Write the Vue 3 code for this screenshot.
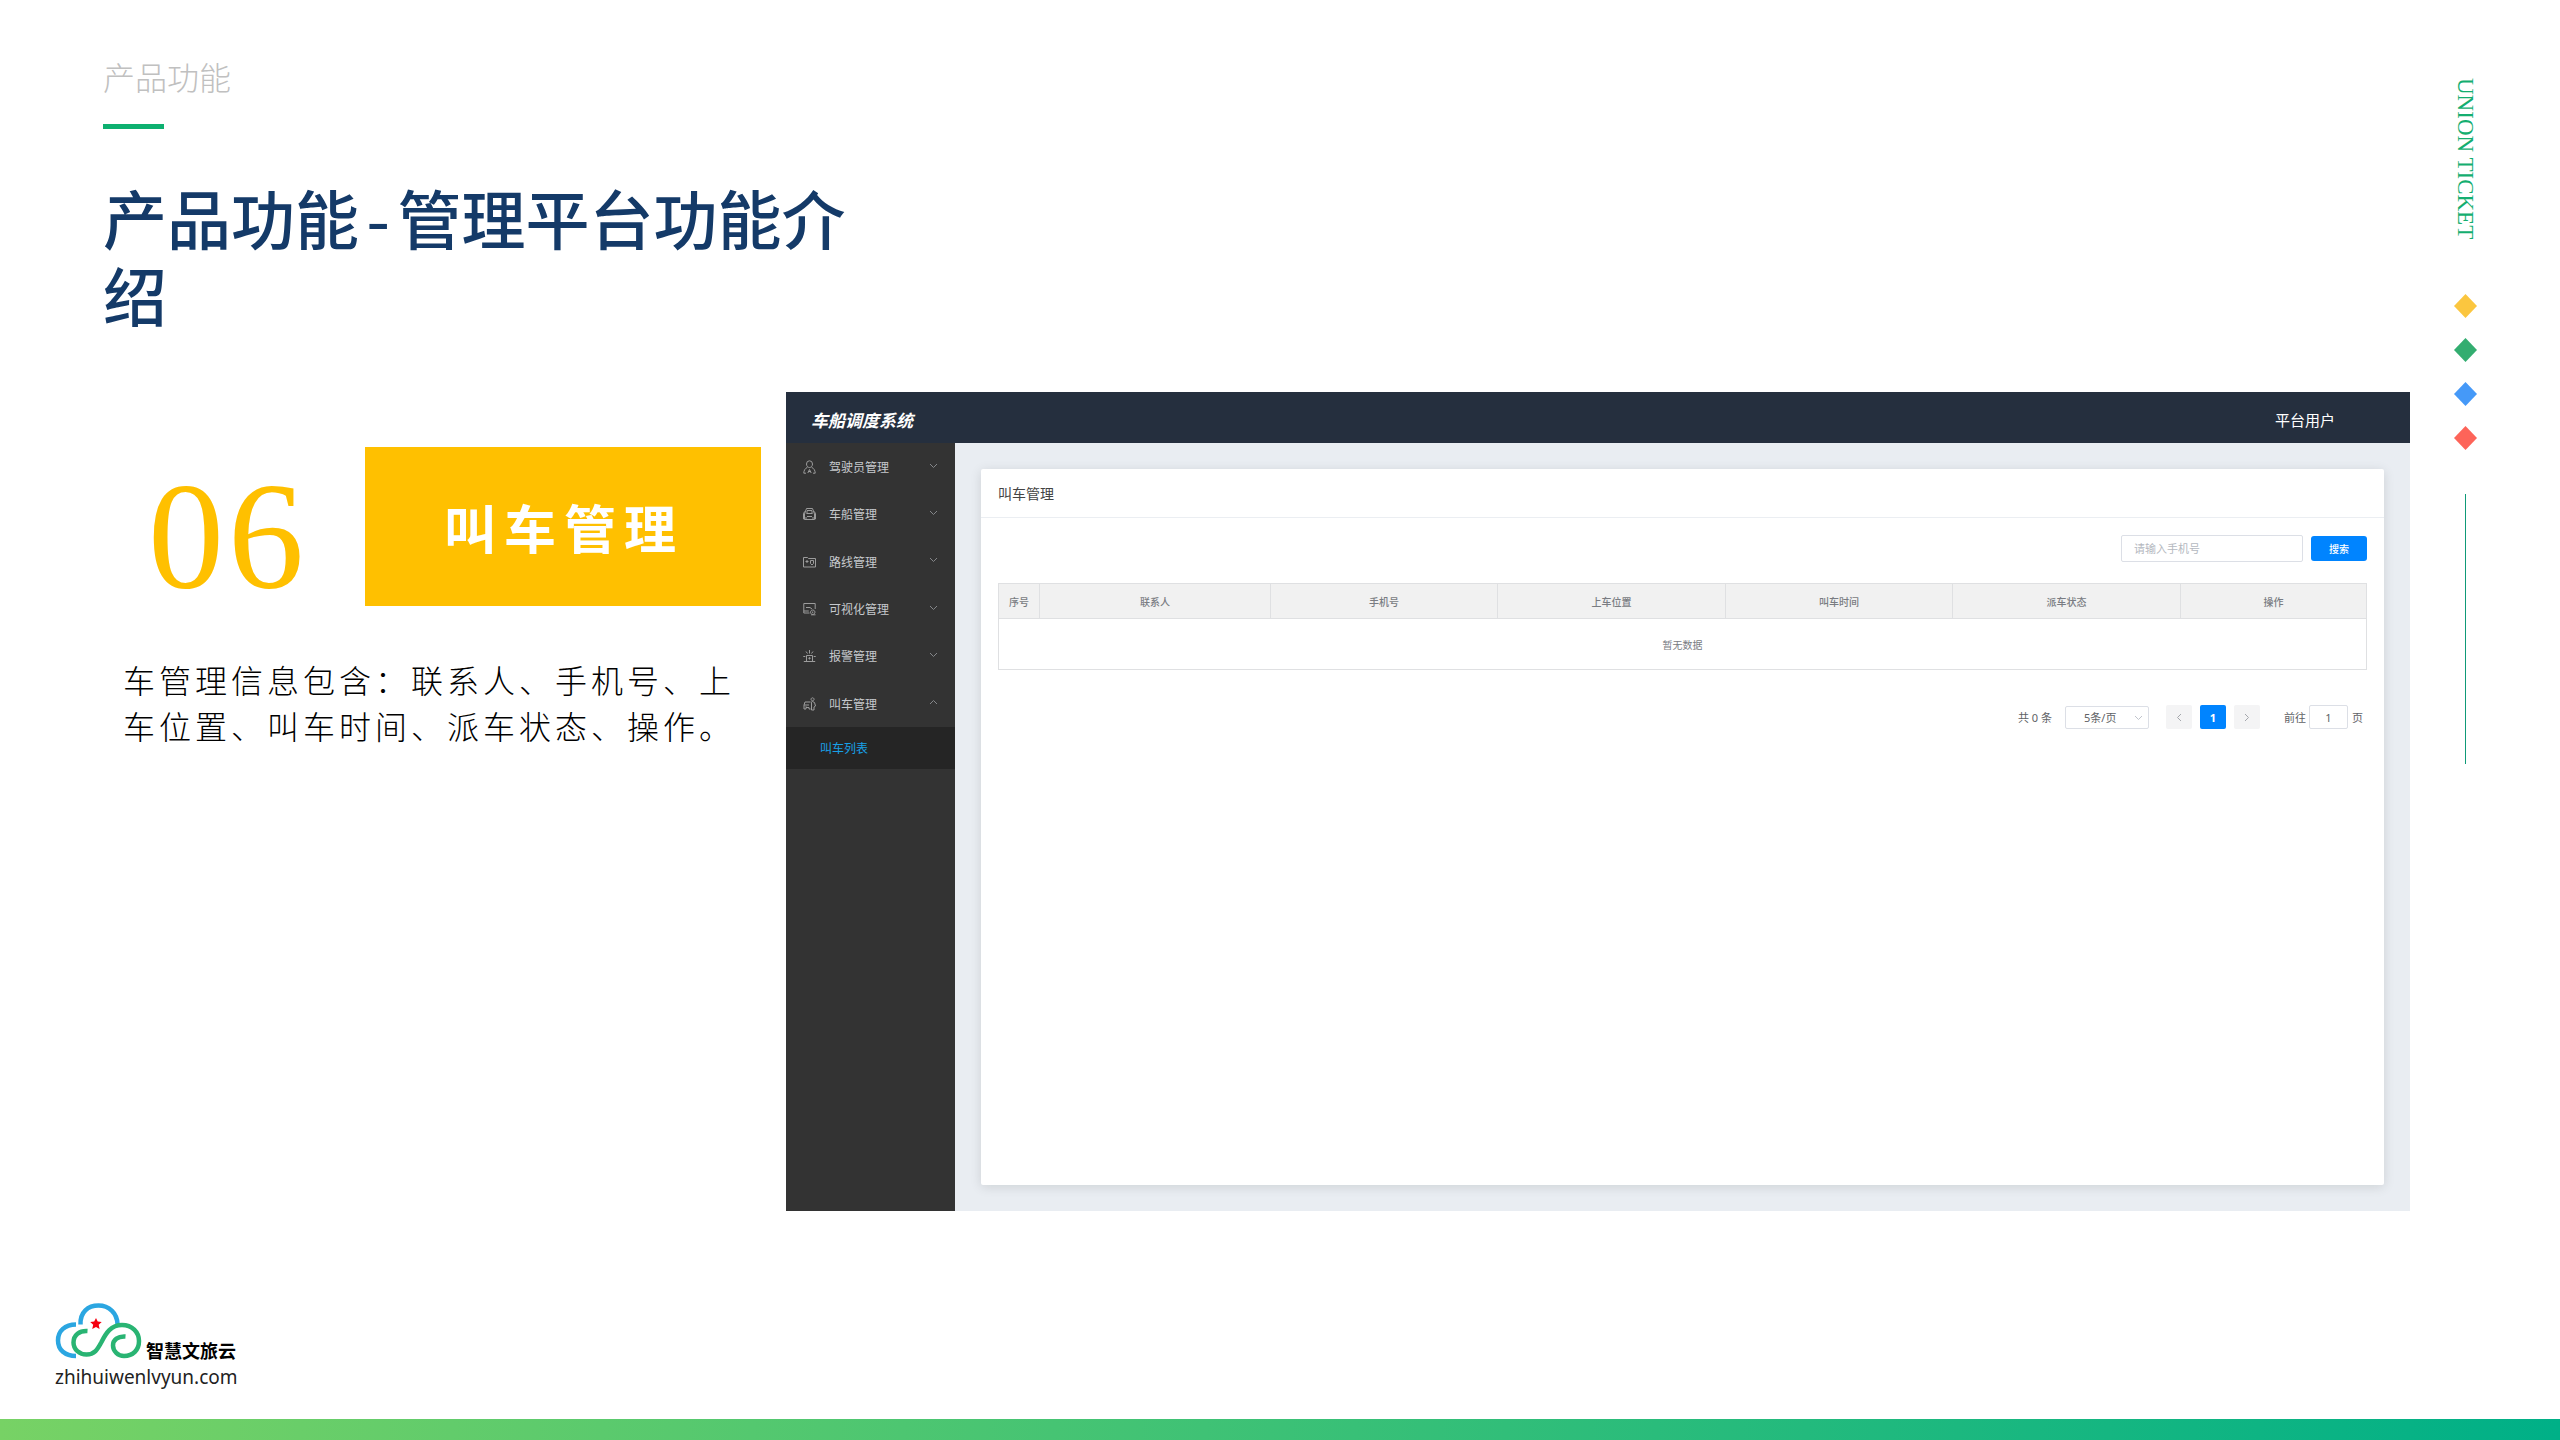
<script setup>
const menu = [
  { label: '驾驶员管理', icon: 'driver' },
  { label: '车船管理', icon: 'vehicle' },
  { label: '路线管理', icon: 'route' },
  { label: '可视化管理', icon: 'visual' },
  { label: '报警管理', icon: 'alarm' },
  { label: '叫车管理', icon: 'call', open: true },
]
const columns = [
  { label: '序号', width: 41 },
  { label: '联系人', width: 231 },
  { label: '手机号', width: 227 },
  { label: '上车位置', width: 228 },
  { label: '叫车时间', width: 227 },
  { label: '派车状态', width: 228 },
  { label: '操作', width: 186 },
]
const total = columns.reduce((sum, c) => sum + c.width, 0)
const diamonds = ['#fbc63f', '#33ad70', '#4599f8', '#fd6459']
const icons = {
  driver: 'M6.500 .8a3 3.300 0 0 1 3 3.200c0 2-1.300 3.500-3 3.500S3.500 6 3.500 4a3 3.300 0 0 1 3-3.200zM4.500 7.200C2 8.500 .8 10.500 .8 13.200H3M8.500 7.200c2.500 1.300 3.700 3.300 3.700 6H10M6.500 9.500L4.800 13M6.500 9.500L8.200 13M5.200 11.500h2.600',
  vehicle: 'M3.500 1.500h6L11.500 7v5.500h-10V7zM4 3.500h5M3.500 6.500h6M4 6.500V4M9 6.500V4M4 9.500h5M1.500 4.500L.5 7v5h1M11.500 4.500l1 2.500v5h-1M3 12.500V10M10 12.500V10',
  route: 'M.5 2.500h4l1 1h7v8.500H.5zM4 5v3M2.500 6.500h3M7.500 5.500h3v3l-1.500 1.500-1.500-1.500z',
  visual: 'M6.500 11H.8V1.500h11.400V7M.8 9h5M3 5.500h4l2 1.500M9.700 8a2.200 2.200 0 1 0 .1 0zM8 12.800h4.500M9.700 9.500v1.500',
  alarm: 'M3.500 12V6.500h6V12M.8 12.500h11.400M6.500 1v3.500M3 2.500l1.500 2M10 2.500l-1.500 2M.3 7.500h2M10.700 7.500h2M6.500 8.200v2.300M5.300 9.300h2.400',
  call: 'M7.500 5H2L1 8v4h2v-1.500h3V12h1.500M1 8h5M2.500 9.800h1M9.500 .8a1.500 1.500 0 1 0 .1 0zM8 5.500l1.500-1 2 1L12.500 9l-1.500 1v3H8.500V5.500',
}
</script>

<template>
  <div class="slide">
    <main class="stage">
      <header class="heading">
        <p class="eyebrow">产品功能</p>
        <span class="rule"></span>
        <h1>产品功能-管理平台功能介绍</h1>
      </header>

      <div class="body">
        <section class="intro">
          <div class="intro-top">
            <span class="number">06</span>
            <h2>叫车管理</h2>
          </div>
          <p class="desc">车管理信息包含：联系人、手机号、上车位置、叫车时间、派车状态、操作。</p>
        </section>

        <section class="app">
          <header class="app-bar">
            <strong>车船调度系统</strong>
            <span>平台用户</span>
          </header>
          <div class="app-main">
            <nav class="side">
              <ul>
                <li v-for="m in menu" :key="m.icon">
                  <svg class="icon" viewBox="0 0 13 14"><path :d="icons[m.icon]" /></svg>
                  <span>{{ m.label }}</span>
                  <svg class="chev" viewBox="0 0 9 6"><path :d="m.open ? 'M1 5l3.500-3.500L8 5' : 'M1 1l3.500 3.500L8 1'" /></svg>
                </li>
              </ul>
              <a class="sub" href="#">叫车列表</a>
            </nav>
            <div class="content">
              <div class="panel">
                <h3>叫车管理</h3>
                <div class="panel-body">
                  <form class="search" @submit.prevent>
                    <input type="text" placeholder="请输入手机号" aria-label="手机号" />
                    <button type="submit">搜索</button>
                  </form>
                  <table>
                    <colgroup>
                      <col v-for="c in columns" :key="c.label" :style="{ width: (c.width / total) * 100 + '%' }" />
                    </colgroup>
                    <thead>
                      <tr><th v-for="c in columns" :key="c.label">{{ c.label }}</th></tr>
                    </thead>
                    <tbody>
                      <tr><td :colspan="columns.length">暂无数据</td></tr>
                    </tbody>
                  </table>
                  <div class="pager">
                    <span class="count">共 0 条</span>
                    <div class="size">
                      <select aria-label="每页条数"><option>5条/页</option></select>
                      <svg class="chev" viewBox="0 0 9 6"><path d="M1 1l3.500 3.500L8 1" /></svg>
                    </div>
                    <div class="pages">
                      <button type="button" aria-label="上一页"><svg viewBox="0 0 6 9"><path d="M5 1L1.500 4.500 5 8" /></svg></button>
                      <button type="button" class="on">1</button>
                      <button type="button" aria-label="下一页"><svg viewBox="0 0 6 9"><path d="M1 1l3.500 3.500L1 8" /></svg></button>
                    </div>
                    <label class="jump">前往<input type="text" value="1" />页</label>
                  </div>
                </div>
              </div>
            </div>
          </div>
        </section>
      </div>
    </main>

    <aside class="rail">
      <span class="rail-text">UNION TICKET</span>
      <div class="diamonds">
        <svg v-for="d in diamonds" :key="d" viewBox="0 0 23 24"><path d="M11.500 0L23 12 11.500 24 0 12z" :fill="d" /></svg>
      </div>
      <span class="rail-line"></span>
    </aside>

    <footer class="foot">
      <div class="brand">
        <svg viewBox="0 0 87 56">
          <g fill="none" stroke-width="4.500">
            <path stroke="#2ba6e1" d="M25.500 21.500C25 9 33 2.500 43.500 2.500S62 10 62.500 21" />
            <path stroke="#2ba6e1" d="M21 21.500C10 21.500 3 28 3 37.500S10 53 21 53" />
            <path stroke="#29b473" d="M32.500 28c-8-.5-14 4-14 11.500 0 7 6 12 13 12 8 0 11-5 15-12.500C51 30 56 22 67 22c10 0 17 7 17 16s-6 15-15 15c-6 0-11-5-11-10.500C58 36.500 63 33 70.500 33.500" />
          </g>
          <path fill="#f5000f" d="M41 15l1.700 3.600 4 .4-3 2.800.9 4.200-3.600-2.100-3.800 2.100 1-4.200-3-2.800 4-.4z" />
        </svg>
        <b>智慧文旅云</b>
      </div>
      <p class="site">zhihuiwenlvyun.com</p>
      <div class="stripe"></div>
    </footer>
  </div>
</template>

<style>
body { margin: 0; background: #fff; }
</style>

<style scoped>
.slide {
  min-height: 100vh;
  box-sizing: border-box;
  display: grid;
  grid-template-columns: 1fr 150px;
  grid-template-rows: auto 1fr;
  font-family: "Liberation Serif", "Noto Sans CJK SC", sans-serif;
  color: #000;
}
h1, h2, h3, p, ul { margin: 0; padding: 0; font-weight: 400; }
.stage { padding-top: 54px; }
.heading { padding-left: 103px; }
.eyebrow { font-size: 32px; line-height: 44px; color: #c0c0c0; font-weight: 300; font-family: "Noto Sans CJK SC", sans-serif; }
.rule { display: block; width: 61px; height: 5px; margin-top: 26px; background: #0db070; }
h1 { max-width: 760px; margin-top: 60px; font-family: "Liberation Mono", "Noto Sans CJK SC", monospace; font-size: 64px; line-height: 77px; font-weight: 500; color: #143a68; }

.body { display: flex; margin-top: 49px; }
.intro { flex: none; width: 761px; margin-right: 25px; padding-top: 55px; }
.intro-top { display: flex; align-items: center; justify-content: space-between; height: 159px; }
.number { margin-left: 148px; padding-top: 20px; font-size: 152px; line-height: 160px; letter-spacing: 4px; color: #ffc000; }
h2 { box-sizing: border-box; width: 396px; height: 159px; padding-top: 5px; padding-left: 2px; text-align: center; font-size: 52px; line-height: 159px; letter-spacing: 8px; font-weight: 700; color: #fff; background: #ffc000; }
.desc { margin: 50px 0 0 123px; font-family: "Noto Sans CJK SC", sans-serif; font-size: 32px; font-weight: 300; line-height: 46px; letter-spacing: 4px; width: 620px; }

.app { flex: 1; display: flex; flex-direction: column; min-height: 819px; font-family: "Noto Sans", "Noto Sans CJK SC", sans-serif; }
.app-bar { display: flex; justify-content: space-between; align-items: center; height: 51px; padding: 4px 75px 0 25px; box-sizing: border-box; background: #252f3e; color: #fff; font-size: 15px; }
.app-bar strong { font-size: 17px; font-style: italic; font-weight: 700; }
.app-main { flex: 1; display: flex; }
.side { width: 169px; background: #333; font-size: 12px; color: #c6c9cd; }
.side ul { display: flex; flex-direction: column; min-height: 284px; list-style: none; }
.side li { flex: 1; display: flex; align-items: center; padding: 1px 17px 0; }
.icon { width: 13px; height: 14px; margin-right: 13px; fill: none; stroke: #9c9c9c; stroke-width: 1; }
.chev { width: 9px; height: 6px; margin-left: auto; fill: none; stroke: #85878a; stroke-width: 1; }
.side li .chev { margin-top: -3px; }
.sub { display: block; padding: 1px 0 0 34px; line-height: 41px; background: #252525; color: #18a0e8; text-decoration: none; }
.content { flex: 1; display: flex; padding: 26px; background: #e9edf2; }
.panel { flex: 1; background: #fff; border-radius: 2px; box-shadow: 0 2px 12px rgba(0, 20, 20, .12); }
h3 { padding: 2px 0 0 17px; border-bottom: 1px solid #ebeef2; font-size: 14px; line-height: 46px; color: #444; }
.panel-body { padding: 17px 17px 0 17px; }
.search { display: flex; justify-content: flex-end; align-items: center; gap: 8px; }
input, select, button { box-sizing: border-box; margin: 0; font-family: inherit; border-radius: 2px; }
input, select { border: 1px solid #dcdfe6; background: #fff; color: #606266; }
.search input { width: 182px; height: 27px; padding: 0 12px; font-size: 11px; }
.search input::placeholder { color: #b4b8c0; }
.search button { width: 56px; height: 25px; padding: 0; border: 0; border-radius: 3px; background: #0084ff; color: #fff; font-size: 10px; font-weight: 500; }
table { width: 100%; margin-top: 21px; table-layout: fixed; border-collapse: collapse; font-size: 10px; color: #797c82; }
th, td { padding: 0; border: 1px solid #dfe0e2; text-align: center; font-weight: 500; }
th { height: 34px; background: #f1f1f1; }
td { height: 50px; font-weight: 400; }
.pager { display: flex; justify-content: flex-end; align-items: center; margin-top: 35px; padding-right: 4px; font-size: 11px; color: #606266; }
.size { position: relative; width: 84px; height: 23px; margin: 0 17px 0 13px; }
.size select { appearance: none; width: 100%; height: 100%; padding: 0 18px; font-size: 11px; }
.size .chev { position: absolute; right: 6px; top: 9px; stroke: #c0c4cc; }
.pages { display: flex; gap: 8px; }
.pages button { width: 26px; height: 24px; padding: 0; border: 0; background: #f4f4f5; font-size: 11px; display: grid; place-items: center; }
.pages button svg { width: 6px; height: 9px; fill: none; stroke: #a4a7ac; }
.pages .on { background: #0084ff; color: #fff; font-weight: 700; }
.jump { display: flex; align-items: center; margin-left: 24px; }
.jump input { width: 39px; height: 24px; margin: 0 4px 0 3px; padding: 0; text-align: center; font-size: 11px; }

.rail { display: flex; flex-direction: column; align-items: center; padding: 78px 39px 0 0; }
.rail-text { writing-mode: vertical-rl; font-size: 23px; line-height: 27px; height: 162px; white-space: nowrap; color: #14ae70; }
.diamonds { display: flex; flex-direction: column; gap: 20px; margin-top: 54px; }
.diamonds svg { width: 23px; height: 24px; }
.rail-line { width: 1px; height: 270px; margin-top: 44px; background: #0f9a78; }

.foot { grid-column: 1 / -1; display: flex; flex-direction: column; justify-content: flex-end; }
.brand { display: flex; align-items: flex-end; gap: 4px; margin-left: 55px; }
.brand svg { width: 87px; height: 56px; margin-bottom: 1px; }
.brand b { font-size: 18px; line-height: 20px; font-family: "Noto Sans CJK SC", sans-serif; }
.site { margin: 3px 0 27px 55px; font-family: "Noto Sans", sans-serif; font-size: 19px; line-height: 29px; color: #222; }
.stripe { height: 21px; background: linear-gradient(90deg, #77d265, #00b087); }
</style>
